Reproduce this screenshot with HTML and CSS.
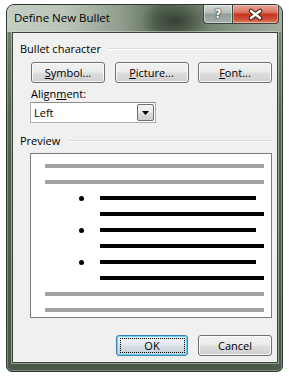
FILE: index.html
```html
<!DOCTYPE html>
<html lang="en">
<head>
    <meta charset="UTF-8">
    <meta name="viewport" content="width=device-width, initial-scale=1.0">
    <title>Define New Bullet</title>
    <link rel="stylesheet" href="styles.css">
</head>
<body>
    <div class="window">
        <div class="titlebar">
            <span class="title">Define New Bullet</span>
            <div class="caption-buttons">
                <div class="cap-btn help">?</div>
                <div class="cap-btn close">
                    <svg width="45" height="17" viewBox="0 0 45 17">
                        <path d="M18 5 L27 12 M27 5 L18 12" stroke="#3a1a12" stroke-width="4.6" stroke-linecap="round"/>
                        <path d="M18 5 L27 12 M27 5 L18 12" stroke="#fff" stroke-width="2.6" stroke-linecap="round"/>
                    </svg>
                </div>
            </div>
        </div>
        <div class="client">
            <div class="legend"><span>Bullet character</span></div>
            <div class="group-body">
                <div class="btn-row">
                    <button class="btn"><u>S</u>ymbol...</button>
                    <button class="btn"><u>P</u>icture...</button>
                    <button class="btn"><u>F</u>ont...</button>
                </div>
                <div class="field-label">Align<u>m</u>ent:</div>
                <div class="combo">
                    <span class="combo-text">Left</span>
                    <span class="combo-arrow">
                        <svg width="7" height="4" viewBox="0 0 7 4"><path d="M0 0 H7 L3.5 4 Z" fill="#000"/></svg>
                    </span>
                </div>
            </div>
            <div class="legend legend-preview"><span>Preview</span></div>
            <div class="group-body">
                <div class="preview">
                    <div class="line gray"></div>
                    <div class="line gray"></div>
                    <div class="bullet-row"><span class="dot"></span><div class="line black short"></div></div>
                    <div class="line black"></div>
                    <div class="bullet-row"><span class="dot"></span><div class="line black short"></div></div>
                    <div class="line black"></div>
                    <div class="bullet-row"><span class="dot"></span><div class="line black short"></div></div>
                    <div class="line black"></div>
                    <div class="line gray"></div>
                    <div class="line gray"></div>
                </div>
            </div>
            <div class="footer">
                <button class="btn btn-default"><span class="focus">OK</span></button>
                <button class="btn btn-cancel">Cancel</button>
            </div>
        </div>
    </div>
</body>
</html>
```

FILE: styles.css
```css
body {
    margin: 0;
    background: #fff;
    font-family: 'Open Sans', 'Noto Sans', Arial, sans-serif;
    font-size: 11px;
    color: #000;
}
.window {
    margin: 4px 0 0 6px;
    width: 277px;
    height: 368px;
    box-sizing: border-box;
    display: flex;
    flex-direction: column;
    border: 1px solid #2e382e;
    border-radius: 8px 8px 6px 6px;
    background: linear-gradient(180deg, #7d8c7b 0%, #56654f 30%, #4a5948 100%);
    box-shadow: inset 0 0 0 1px rgba(255, 255, 255, 0.3);
    overflow: hidden;
}
.titlebar {
    height: 27px;
    display: flex;
    align-items: flex-start;
    padding-left: 7px;
    background:
        radial-gradient(ellipse 34px 22px at 168px 16px, rgba(44, 56, 42, 0.85), rgba(44, 56, 42, 0)),
        linear-gradient(90deg, #c6cec3 0%, #b9c3b6 22%, #8f9c8c 42%, #5f6e5c 55%, #6f7e6c 70%, #8c9a8a 85%, #a2ad9f 100%);
}
.title {
    padding-top: 5px;
    line-height: 16px;
    font-size: 11.5px;
    color: #000;
}
.caption-buttons {
    margin-left: auto;
    margin-right: 3px;
    display: flex;
}
.cap-btn {
    height: 19px;
    box-sizing: border-box;
    border: 1px solid #3d4540;
    border-top: none;
    display: flex;
    align-items: center;
    justify-content: center;
}
.help {
    width: 29px;
    border-right: none;
    border-radius: 0 0 0 4px;
    background: linear-gradient(180deg, #d3d9d5 0%, #b4bcb8 45%, #939d98 50%, #a7b1ac 100%);
    box-shadow: inset 0 0 0 1px rgba(255, 255, 255, 0.45);
    font-family: 'DejaVu Sans', sans-serif;
    font-weight: bold;
    font-size: 12px;
    color: #fff;
    text-shadow: 0 0 1px #333, 0 0 1px #333, 0 0 2px #444;
}
.close {
    width: 47px;
    border-radius: 0 0 4px 0;
    background: linear-gradient(180deg, #eaa696 0%, #d97862 40%, #c7371f 52%, #d0503a 80%, #e2866c 100%);
    box-shadow: inset 0 0 0 1px rgba(255, 255, 255, 0.35);
}
.client {
    flex: 1;
    margin: 0 4px 8px 5px;
    display: flex;
    flex-direction: column;
    padding: 0 5px 6px 7px;
    background: #f0f0f0;
    border: 1px solid #3a463a;
    box-shadow: 0 0 0 1px rgba(220, 228, 220, 0.5);
}
.legend {
    margin-top: 8px;
    height: 15px;
    line-height: 15px;
    display: flex;
    align-items: center;
    gap: 7px;
}
.legend::after {
    content: "";
    flex: 1;
    border-top: 1px solid #d5dfe5;
    border-bottom: 1px solid #fff;
}
.legend-preview {
    margin-top: 10px;
}
.group-body {
    padding-left: 10px;
}
.btn-row {
    margin-top: 6px;
    margin-left: 1px;
    display: flex;
    justify-content: space-between;
}
.btn {
    width: 74px;
    height: 21px;
    padding: 0;
    font-family: inherit;
    font-size: 11px;
    color: #000;
    border: 1px solid #707070;
    border-radius: 3px;
    background: linear-gradient(180deg, #f2f2f2 0%, #ebebeb 48%, #dddddd 52%, #cfcfcf 100%);
    box-shadow: inset 0 0 0 1px rgba(255, 255, 255, 0.8);
}
.field-label {
    margin-top: 3px;
    margin-left: 1px;
    line-height: 15px;
}
.combo {
    margin-top: 1px;
    width: 126px;
    height: 21px;
    box-sizing: border-box;
    display: flex;
    align-items: center;
    background: #fff;
    border: 1px solid #abadb3;
    border-top-color: #8e8f8f;
}
.combo-text {
    flex: 1;
    padding-left: 3px;
}
.combo-arrow {
    width: 17px;
    height: 17px;
    margin-right: 1px;
    box-sizing: border-box;
    display: flex;
    align-items: center;
    justify-content: center;
    border: 1px solid #707070;
    border-radius: 2px;
    background: linear-gradient(180deg, #f2f2f2 0%, #ebebeb 48%, #dddddd 52%, #cfcfcf 100%);
}
.preview {
    margin-top: 5px;
    height: 165px;
    box-sizing: border-box;
    padding: 10px 7px 0 14px;
    background: #fff;
    border: 1px solid #7c7c7c;
}
.line {
    height: 4px;
    margin-bottom: 12px;
}
.gray {
    background: #a3a3a3;
}
.black {
    background: #000;
    margin-left: 55px;
}
.bullet-row {
    display: flex;
    align-items: center;
    height: 4px;
    margin-bottom: 12px;
}
.bullet-row .line {
    margin-bottom: 0;
}
.dot {
    width: 5px;
    height: 5px;
    margin-left: 34px;
    border-radius: 50%;
    background: #000;
}
.short {
    flex: 1;
    margin-left: 16px;
    margin-right: 8px;
}
.footer {
    margin-top: auto;
    display: flex;
    justify-content: flex-end;
    gap: 10px;
}
.btn-default {
    width: 72px;
    border-color: #3c7fb1;
    background: linear-gradient(180deg, #eef3f6 0%, #e4eaee 48%, #d4dde3 52%, #c8d3da 100%);
    box-shadow: inset 0 0 0 1px #67d3f5;
    display: flex;
    align-items: center;
    justify-content: center;
}
.focus {
    display: flex;
    align-items: center;
    justify-content: center;
    width: 63px;
    height: 13px;
    border: 1px dotted #000;
}
```
